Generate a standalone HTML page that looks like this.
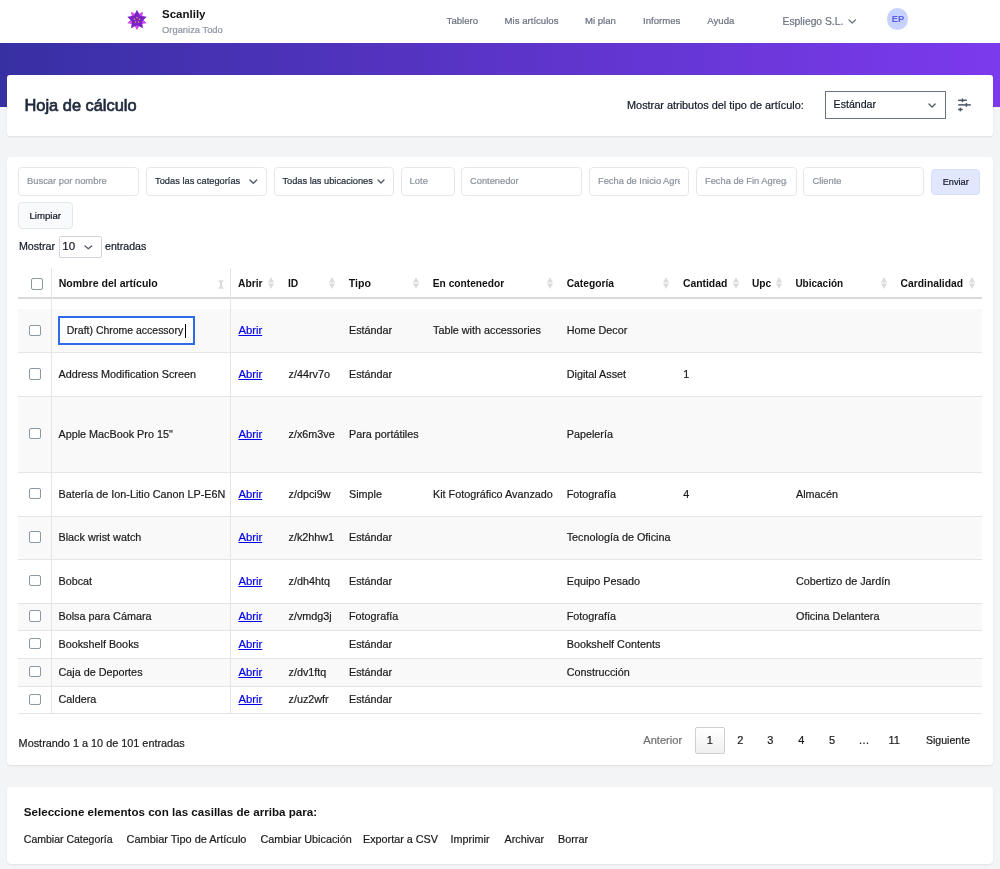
<!DOCTYPE html>
<html><head><meta charset="utf-8"><style>
html,body{margin:0;padding:0;}
body{width:1000px;height:869px;overflow:hidden;position:relative;background:#f3f4f6;font-family:"Liberation Sans", sans-serif;}
.t{position:absolute;white-space:nowrap;}
.b{position:absolute;box-sizing:border-box;}
</style></head><body><div id="w" style="position:absolute;left:0;top:0;width:1000px;height:869px;will-change:transform;">
<div class="b" style="left:0px;top:0px;width:1000px;height:43px;background:#fff;"></div><svg class="b" style="left:0;top:0" width="300" height="42"><polygon points="137.00,30.20 133.94,24.21 127.30,23.15 132.05,18.39 131.00,11.75 137.00,14.80 143.00,11.75 141.95,18.39 146.70,23.15 140.06,24.21" fill="#cf48f2"/><polygon points="137.00,9.80 140.06,15.79 146.70,16.85 141.95,21.61 143.00,28.25 137.00,25.20 131.00,28.25 132.05,21.61 127.30,16.85 133.94,15.79" fill="#7a22c4"/><circle cx="137.00" cy="17.40" r="0.75" fill="#e9a85a"/><circle cx="139.47" cy="19.20" r="0.75" fill="#e9a85a"/><circle cx="138.53" cy="22.10" r="0.75" fill="#e9a85a"/><circle cx="135.47" cy="22.10" r="0.75" fill="#e9a85a"/><circle cx="134.53" cy="19.20" r="0.75" fill="#e9a85a"/></svg><div class="t" style="left:162px;top:4.49px;line-height:20px;font-size:11.5px;color:#111111;font-weight:700;">Scanlily</div><div class="t" style="left:162px;top:19.76px;line-height:20px;font-size:9.4px;color:#8e95a3;font-weight:400;-webkit-text-stroke:0.2px #8e95a3;">Organiza Todo</div><div class="t" style="left:446.6px;top:11.02px;line-height:20px;font-size:9.6px;color:#6b7280;font-weight:400;-webkit-text-stroke:0.2px #6b7280;">Tablero</div><div class="t" style="left:504.6px;top:11.02px;line-height:20px;font-size:9.6px;color:#6b7280;font-weight:400;-webkit-text-stroke:0.2px #6b7280;">Mis artículos</div><div class="t" style="left:585px;top:11.02px;line-height:20px;font-size:9.6px;color:#6b7280;font-weight:400;-webkit-text-stroke:0.2px #6b7280;">Mi plan</div><div class="t" style="left:643px;top:11.02px;line-height:20px;font-size:9.6px;color:#6b7280;font-weight:400;-webkit-text-stroke:0.2px #6b7280;">Informes</div><div class="t" style="left:707.3px;top:11.02px;line-height:20px;font-size:9.6px;color:#6b7280;font-weight:400;-webkit-text-stroke:0.2px #6b7280;">Ayuda</div><div class="t" style="left:782.6px;top:11.92px;line-height:20px;font-size:10.3px;color:#6b7280;font-weight:400;-webkit-text-stroke:0.2px #6b7280;">Espliego S.L.</div><svg class="b" style="left:846.5px;top:17.9px" width="10.399999999999977" height="7.0" viewBox="-2 -2 10.399999999999977 7.0"><polyline points="0,0 3.1999999999999886,3.0 6.399999999999977,0" fill="none" stroke="#6b7280" stroke-width="1.2" stroke-linecap="round" stroke-linejoin="round"/></svg><div class="b" style="left:886.6px;top:8.4px;width:21.4px;height:21.4px;border-radius:50%;background:#c7d2fe;"></div><div class="t" style="left:891.8px;top:8.71px;line-height:20px;font-size:9.3px;color:#5b5ee6;font-weight:700;">EP</div><div class="b" style="left:0px;top:42.8px;width:1000px;height:64.2px;background:linear-gradient(90deg,#3730a3 0%,#5b34c8 50%,#7c3aed 100%);"></div><div class="b" style="left:7px;top:74.5px;width:986px;height:61.0px;background:#fff;border-radius:3px;box-shadow:0 1px 2px rgba(0,0,0,0.08);"></div><div class="t" style="left:24.5px;top:94.70px;line-height:20px;font-size:16.4px;color:#1e293b;font-weight:400;-webkit-text-stroke:0.7px #1e293b;">Hoja de cálculo</div><div class="t" style="left:627px;top:95.13px;line-height:20px;font-size:10.9px;color:#111827;font-weight:400;-webkit-text-stroke:0.2px #111827;">Mostrar atributos del tipo de artículo:</div><div class="b" style="left:825px;top:91px;width:121px;height:28px;border:1px solid #6b7280;background:#fff;"></div><div class="t" style="left:833.6px;top:94.33px;line-height:20px;font-size:10.6px;color:#111827;font-weight:400;-webkit-text-stroke:0.2px #111827;">Estándar</div><svg class="b" style="left:926.5px;top:101.5px" width="10.200000000000045" height="7.099999999999994" viewBox="-2 -2 10.200000000000045 7.099999999999994"><polyline points="0,0 3.1000000000000227,3.0999999999999943 6.2000000000000455,0" fill="none" stroke="#4b5563" stroke-width="1.3" stroke-linecap="round" stroke-linejoin="round"/></svg><svg class="b" style="left:950px;top:90px" width="30" height="30" viewBox="950 90 30 30"><g stroke="#4b5563" stroke-width="1.5" stroke-linecap="butt" fill="none"><line x1="958.2" y1="100.3" x2="966.8" y2="100.3"/><line x1="962.5" y1="98.5" x2="962.5" y2="102.1"/><line x1="958.2" y1="104.9" x2="970.8" y2="104.9"/><line x1="966.4" y1="103.1" x2="966.4" y2="106.7"/><line x1="958.2" y1="109.5" x2="962.7" y2="109.5"/><line x1="960.4" y1="107.7" x2="960.4" y2="111.3"/></g></svg><div class="b" style="left:7px;top:157px;width:986px;height:608px;background:#fff;border-radius:4px;box-shadow:0 1px 2px rgba(0,0,0,0.08);"></div><div class="b" style="left:18px;top:167px;width:121px;height:28.5px;border:1px solid #e5e7eb;border-radius:4px;background:#fff;"></div><div class="t" style="left:27px;top:171.31px;line-height:20px;font-size:9.4px;color:#8b929e;font-weight:400;-webkit-text-stroke:0.2px #8b929e;">Buscar por nombre</div><div class="b" style="left:145.5px;top:167px;width:121.0px;height:28.5px;border:1px solid #e5e7eb;border-radius:4px;background:#fff;"></div><div class="t" style="left:155px;top:171.31px;line-height:20px;font-size:9.3px;color:#1f2937;font-weight:400;-webkit-text-stroke:0.2px #1f2937;">Todas las categorías</div><svg class="b" style="left:248.1px;top:178.3px" width="10.700000000000017" height="7.199999999999989" viewBox="-2 -2 10.700000000000017 7.199999999999989"><polyline points="0,0 3.3500000000000085,3.1999999999999886 6.700000000000017,0" fill="none" stroke="#525a69" stroke-width="1.4" stroke-linecap="round" stroke-linejoin="round"/></svg><div class="b" style="left:273.5px;top:167px;width:120.5px;height:28.5px;border:1px solid #e5e7eb;border-radius:4px;background:#fff;"></div><div class="t" style="left:282.4px;top:171.31px;line-height:20px;font-size:9.26px;color:#1f2937;font-weight:400;-webkit-text-stroke:0.2px #1f2937;">Todas las ubicaciones</div><svg class="b" style="left:376.2px;top:178.3px" width="10.0" height="7.0" viewBox="-2 -2 10.0 7.0"><polyline points="0,0 3.0,3.0 6.0,0" fill="none" stroke="#525a69" stroke-width="1.4" stroke-linecap="round" stroke-linejoin="round"/></svg><div class="b" style="left:401px;top:167px;width:53.5px;height:28.5px;border:1px solid #e5e7eb;border-radius:4px;background:#fff;"></div><div class="t" style="left:409.6px;top:171.31px;line-height:20px;font-size:9.4px;color:#8b929e;font-weight:400;-webkit-text-stroke:0.2px #8b929e;">Lote</div><div class="b" style="left:461.3px;top:167px;width:120.49999999999994px;height:28.5px;border:1px solid #e5e7eb;border-radius:4px;background:#fff;"></div><div class="t" style="left:470px;top:171.31px;line-height:20px;font-size:9.3px;color:#8b929e;font-weight:400;-webkit-text-stroke:0.2px #8b929e;">Contenedor</div><div class="b" style="left:588.8px;top:167px;width:100.5px;height:28.5px;border:1px solid #e5e7eb;border-radius:4px;background:#fff;"></div><div class="t" style="left:598px;top:171.31px;line-height:20px;font-size:9.3px;color:#8b929e;font-weight:400;-webkit-text-stroke:0.2px #8b929e;width:82px;overflow:hidden;">Fecha de Inicio Agre</div><div class="b" style="left:696px;top:167px;width:100.5px;height:28.5px;border:1px solid #e5e7eb;border-radius:4px;background:#fff;"></div><div class="t" style="left:705px;top:171.31px;line-height:20px;font-size:9.3px;color:#8b929e;font-weight:400;-webkit-text-stroke:0.2px #8b929e;width:82px;overflow:hidden;">Fecha de Fin Agregado</div><div class="b" style="left:803.4px;top:167px;width:120.70000000000005px;height:28.5px;border:1px solid #e5e7eb;border-radius:4px;background:#fff;"></div><div class="t" style="left:812.5px;top:171.31px;line-height:20px;font-size:9.3px;color:#8b929e;font-weight:400;-webkit-text-stroke:0.2px #8b929e;">Cliente</div><div class="b" style="left:931px;top:169px;width:48.60000000000002px;height:26px;border:1px solid #d6defa;border-radius:4px;background:#e0e7ff;"></div><div class="t" style="left:942.7px;top:171.71px;line-height:20px;font-size:9.2px;color:#111827;font-weight:400;-webkit-text-stroke:0.2px #111827;">Enviar</div><div class="b" style="left:18px;top:202px;width:55px;height:26.5px;border:1px solid #e5e7eb;border-radius:4px;background:#f9fafb;"></div><div class="t" style="left:29.5px;top:205.62px;line-height:20px;font-size:9.6px;color:#111827;font-weight:400;-webkit-text-stroke:0.2px #111827;">Limpiar</div><div class="t" style="left:18.9px;top:236.13px;line-height:20px;font-size:10.7px;color:#111827;font-weight:400;-webkit-text-stroke:0.2px #111827;">Mostrar</div><div class="b" style="left:58.5px;top:235.5px;width:43.3px;height:22.19999999999999px;border:1px solid #d1d5db;border-radius:2px;background:#fff;"></div><div class="t" style="left:62.3px;top:235.84px;line-height:20px;font-size:11.5px;color:#111827;font-weight:400;-webkit-text-stroke:0.2px #111827;">10</div><svg class="b" style="left:82.5px;top:243.8px" width="10.700000000000003" height="6.799999999999983" viewBox="-2 -2 10.700000000000003 6.799999999999983"><polyline points="0,0 3.3500000000000014,2.799999999999983 6.700000000000003,0" fill="none" stroke="#4b5563" stroke-width="1.2" stroke-linecap="round" stroke-linejoin="round"/></svg><div class="t" style="left:105px;top:236.13px;line-height:20px;font-size:10.6px;color:#111827;font-weight:400;-webkit-text-stroke:0.2px #111827;">entradas</div><div class="b" style="left:18px;top:309px;width:963.5px;height:43.39999999999998px;background:#f9f9f9;"></div><div class="b" style="left:18px;top:396px;width:963.5px;height:76px;background:#f9f9f9;"></div><div class="b" style="left:18px;top:516px;width:963.5px;height:43.299999999999955px;background:#f9f9f9;"></div><div class="b" style="left:18px;top:603px;width:963.5px;height:27.299999999999955px;background:#f9f9f9;"></div><div class="b" style="left:18px;top:658px;width:963.5px;height:28px;background:#f9f9f9;"></div><div class="b" style="left:18px;top:351.9px;width:963.5px;height:1.0px;background:#e5e5e5;"></div><div class="b" style="left:18px;top:395.5px;width:963.5px;height:1.0px;background:#e5e5e5;"></div><div class="b" style="left:18px;top:471.5px;width:963.5px;height:1.0px;background:#e5e5e5;"></div><div class="b" style="left:18px;top:515.5px;width:963.5px;height:1.0px;background:#e5e5e5;"></div><div class="b" style="left:18px;top:558.8px;width:963.5px;height:1.0px;background:#e5e5e5;"></div><div class="b" style="left:18px;top:602.5px;width:963.5px;height:1.0px;background:#e5e5e5;"></div><div class="b" style="left:18px;top:629.8px;width:963.5px;height:1.0px;background:#e5e5e5;"></div><div class="b" style="left:18px;top:657.5px;width:963.5px;height:1.0px;background:#e5e5e5;"></div><div class="b" style="left:18px;top:685.5px;width:963.5px;height:1.0px;background:#e5e5e5;"></div><div class="b" style="left:18px;top:713.0px;width:963.5px;height:1.0px;background:#e5e5e5;"></div><div class="b" style="left:18px;top:297px;width:963.5px;height:2px;background:#d9d9d9;"></div><div class="b" style="left:50.8px;top:268px;width:1.0px;height:445.5px;background:#e5e5e5;"></div><div class="b" style="left:230.3px;top:268px;width:1.0px;height:445.5px;background:#e5e5e5;"></div><div class="b" style="left:31px;top:278px;width:11.5px;height:11.5px;border:1.2px solid #8f96a3;border-radius:2px;background:#fff;"></div><div class="t" style="left:58.7px;top:273.13px;line-height:20px;font-size:10.55px;color:#111111;font-weight:700;">Nombre del artículo</div><svg class="b" style="left:217.8px;top:279.5px" width="6" height="9" viewBox="0 0 6 9"><polygon points="0.2,0.3 5.8,0.3 3,4.5" fill="#dcdcdc"/><polygon points="0.2,8.7 5.8,8.7 3,4.5" fill="#dcdcdc"/><rect x="2.4" y="3.6" width="1.2" height="1.8" fill="#bdbdbd"/></svg><div class="t" style="left:238px;top:273.72px;line-height:20px;font-size:10.3px;color:#111111;font-weight:700;">Abrir</div><svg class="b" style="left:268.2px;top:276.5px" width="6" height="12" viewBox="0 0 6 12"><polygon points="0,5.6 6,5.6 3,0" fill="#dcdcdc"/><polygon points="0,6.4 6,6.4 3,12" fill="#dcdcdc"/></svg><div class="t" style="left:288px;top:273.72px;line-height:20px;font-size:10.3px;color:#111111;font-weight:700;">ID</div><svg class="b" style="left:329.1px;top:276.5px" width="6" height="12" viewBox="0 0 6 12"><polygon points="0,5.6 6,5.6 3,0" fill="#dcdcdc"/><polygon points="0,6.4 6,6.4 3,12" fill="#dcdcdc"/></svg><div class="t" style="left:348.8px;top:273.13px;line-height:20px;font-size:10.6px;color:#111111;font-weight:700;">Tipo</div><svg class="b" style="left:413.1px;top:276.5px" width="6" height="12" viewBox="0 0 6 12"><polygon points="0,5.6 6,5.6 3,0" fill="#dcdcdc"/><polygon points="0,6.4 6,6.4 3,12" fill="#dcdcdc"/></svg><div class="t" style="left:432.8px;top:273.72px;line-height:20px;font-size:10.2px;color:#111111;font-weight:700;">En contenedor</div><svg class="b" style="left:546.8px;top:276.5px" width="6" height="12" viewBox="0 0 6 12"><polygon points="0,5.6 6,5.6 3,0" fill="#dcdcdc"/><polygon points="0,6.4 6,6.4 3,12" fill="#dcdcdc"/></svg><div class="t" style="left:566.7px;top:273.72px;line-height:20px;font-size:10.26px;color:#111111;font-weight:700;">Categoría</div><svg class="b" style="left:662.7px;top:276.5px" width="6" height="12" viewBox="0 0 6 12"><polygon points="0,5.6 6,5.6 3,0" fill="#dcdcdc"/><polygon points="0,6.4 6,6.4 3,12" fill="#dcdcdc"/></svg><div class="t" style="left:682.9px;top:273.72px;line-height:20px;font-size:10.4px;color:#111111;font-weight:700;">Cantidad</div><svg class="b" style="left:732.8px;top:276.5px" width="6" height="12" viewBox="0 0 6 12"><polygon points="0,5.6 6,5.6 3,0" fill="#dcdcdc"/><polygon points="0,6.4 6,6.4 3,12" fill="#dcdcdc"/></svg><div class="t" style="left:752px;top:273.72px;line-height:20px;font-size:10.2px;color:#111111;font-weight:700;">Upc</div><svg class="b" style="left:775.5px;top:276.5px" width="6" height="12" viewBox="0 0 6 12"><polygon points="0,5.6 6,5.6 3,0" fill="#dcdcdc"/><polygon points="0,6.4 6,6.4 3,12" fill="#dcdcdc"/></svg><div class="t" style="left:795.4px;top:273.72px;line-height:20px;font-size:10.0px;color:#111111;font-weight:700;">Ubicación</div><svg class="b" style="left:880.5px;top:276.5px" width="6" height="12" viewBox="0 0 6 12"><polygon points="0,5.6 6,5.6 3,0" fill="#dcdcdc"/><polygon points="0,6.4 6,6.4 3,12" fill="#dcdcdc"/></svg><div class="t" style="left:900.6px;top:273.72px;line-height:20px;font-size:10.3px;color:#111111;font-weight:700;">Cardinalidad</div><svg class="b" style="left:968.6px;top:276.5px" width="6" height="12" viewBox="0 0 6 12"><polygon points="0,5.6 6,5.6 3,0" fill="#dcdcdc"/><polygon points="0,6.4 6,6.4 3,12" fill="#dcdcdc"/></svg><div class="b" style="left:29.2px;top:324.49999999999994px;width:11.500000000000004px;height:11.5px;border:1.2px solid #8f96a3;border-radius:2px;background:#fff;"></div><div class="b" style="left:57.6px;top:316.1px;width:137.3px;height:29.19999999999999px;border:2px solid #2e6be6;background:#fff;"></div><div class="t" style="left:66.8px;top:320.93px;line-height:20px;font-size:10.48px;color:#1a1a1a;font-weight:400;-webkit-text-stroke:0.2px #1a1a1a;">Draft) Chrome accessory</div><div class="b" style="left:184.6px;top:324px;width:1.200000000000017px;height:13.5px;background:#000;"></div><div class="t" style="left:349px;top:320.23px;line-height:20px;font-size:10.8px;color:#1a1a1a;font-weight:400;-webkit-text-stroke:0.2px #1a1a1a;">Estándar</div><div class="t" style="left:433px;top:320.23px;line-height:20px;font-size:10.8px;color:#1a1a1a;font-weight:400;-webkit-text-stroke:0.2px #1a1a1a;">Table with accessories</div><div class="t" style="left:566.7px;top:320.23px;line-height:20px;font-size:10.8px;color:#1a1a1a;font-weight:400;-webkit-text-stroke:0.2px #1a1a1a;">Home Decor</div><div class="t" style="left:238.4px;top:320.34px;line-height:20px;font-size:11.3px;color:#0000ee;font-weight:400;-webkit-text-stroke:0.2px #0000ee;text-decoration:underline;text-underline-offset:1px;text-decoration-thickness:0.8px;">Abrir</div><div class="b" style="left:29.2px;top:367.99999999999994px;width:11.500000000000004px;height:11.5px;border:1.2px solid #8f96a3;border-radius:2px;background:#fff;"></div><div class="t" style="left:58.5px;top:363.73px;line-height:20px;font-size:10.8px;color:#1a1a1a;font-weight:400;-webkit-text-stroke:0.2px #1a1a1a;">Address Modification Screen</div><div class="t" style="left:288.5px;top:363.73px;line-height:20px;font-size:10.8px;color:#1a1a1a;font-weight:400;-webkit-text-stroke:0.2px #1a1a1a;">z/44rv7o</div><div class="t" style="left:349px;top:363.73px;line-height:20px;font-size:10.8px;color:#1a1a1a;font-weight:400;-webkit-text-stroke:0.2px #1a1a1a;">Estándar</div><div class="t" style="left:566.7px;top:363.73px;line-height:20px;font-size:10.8px;color:#1a1a1a;font-weight:400;-webkit-text-stroke:0.2px #1a1a1a;">Digital Asset</div><div class="t" style="left:683.2px;top:363.73px;line-height:20px;font-size:10.8px;color:#1a1a1a;font-weight:400;-webkit-text-stroke:0.2px #1a1a1a;">1</div><div class="t" style="left:238.4px;top:363.84px;line-height:20px;font-size:11.3px;color:#0000ee;font-weight:400;-webkit-text-stroke:0.2px #0000ee;text-decoration:underline;text-underline-offset:1px;text-decoration-thickness:0.8px;">Abrir</div><div class="b" style="left:29.2px;top:427.79999999999995px;width:11.500000000000004px;height:11.5px;border:1.2px solid #8f96a3;border-radius:2px;background:#fff;"></div><div class="t" style="left:58.5px;top:423.53px;line-height:20px;font-size:10.8px;color:#1a1a1a;font-weight:400;-webkit-text-stroke:0.2px #1a1a1a;">Apple MacBook Pro 15"</div><div class="t" style="left:288.5px;top:423.53px;line-height:20px;font-size:10.8px;color:#1a1a1a;font-weight:400;-webkit-text-stroke:0.2px #1a1a1a;">z/x6m3ve</div><div class="t" style="left:349px;top:423.53px;line-height:20px;font-size:10.8px;color:#1a1a1a;font-weight:400;-webkit-text-stroke:0.2px #1a1a1a;">Para portátiles</div><div class="t" style="left:566.7px;top:423.53px;line-height:20px;font-size:10.8px;color:#1a1a1a;font-weight:400;-webkit-text-stroke:0.2px #1a1a1a;">Papelería</div><div class="t" style="left:238.4px;top:423.64px;line-height:20px;font-size:11.3px;color:#0000ee;font-weight:400;-webkit-text-stroke:0.2px #0000ee;text-decoration:underline;text-underline-offset:1px;text-decoration-thickness:0.8px;">Abrir</div><div class="b" style="left:29.2px;top:487.79999999999995px;width:11.500000000000004px;height:11.5px;border:1.2px solid #8f96a3;border-radius:2px;background:#fff;"></div><div class="t" style="left:58.5px;top:483.53px;line-height:20px;font-size:10.8px;color:#1a1a1a;font-weight:400;-webkit-text-stroke:0.2px #1a1a1a;">Batería de Ion-Litio Canon LP-E6N</div><div class="t" style="left:288.5px;top:483.53px;line-height:20px;font-size:10.8px;color:#1a1a1a;font-weight:400;-webkit-text-stroke:0.2px #1a1a1a;">z/dpci9w</div><div class="t" style="left:349px;top:483.53px;line-height:20px;font-size:10.8px;color:#1a1a1a;font-weight:400;-webkit-text-stroke:0.2px #1a1a1a;">Simple</div><div class="t" style="left:433px;top:483.53px;line-height:20px;font-size:10.8px;color:#1a1a1a;font-weight:400;-webkit-text-stroke:0.2px #1a1a1a;">Kit Fotográfico Avanzado</div><div class="t" style="left:566.7px;top:483.53px;line-height:20px;font-size:10.8px;color:#1a1a1a;font-weight:400;-webkit-text-stroke:0.2px #1a1a1a;">Fotografía</div><div class="t" style="left:683.2px;top:483.53px;line-height:20px;font-size:10.8px;color:#1a1a1a;font-weight:400;-webkit-text-stroke:0.2px #1a1a1a;">4</div><div class="t" style="left:796px;top:483.53px;line-height:20px;font-size:10.8px;color:#1a1a1a;font-weight:400;-webkit-text-stroke:0.2px #1a1a1a;">Almacén</div><div class="t" style="left:238.4px;top:483.64px;line-height:20px;font-size:11.3px;color:#0000ee;font-weight:400;-webkit-text-stroke:0.2px #0000ee;text-decoration:underline;text-underline-offset:1px;text-decoration-thickness:0.8px;">Abrir</div><div class="b" style="left:29.2px;top:531.4499999999999px;width:11.500000000000004px;height:11.5px;border:1.2px solid #8f96a3;border-radius:2px;background:#fff;"></div><div class="t" style="left:58.5px;top:527.18px;line-height:20px;font-size:10.8px;color:#1a1a1a;font-weight:400;-webkit-text-stroke:0.2px #1a1a1a;">Black wrist watch</div><div class="t" style="left:288.5px;top:527.18px;line-height:20px;font-size:10.8px;color:#1a1a1a;font-weight:400;-webkit-text-stroke:0.2px #1a1a1a;">z/k2hhw1</div><div class="t" style="left:349px;top:527.18px;line-height:20px;font-size:10.8px;color:#1a1a1a;font-weight:400;-webkit-text-stroke:0.2px #1a1a1a;">Estándar</div><div class="t" style="left:566.7px;top:527.18px;line-height:20px;font-size:10.8px;color:#1a1a1a;font-weight:400;-webkit-text-stroke:0.2px #1a1a1a;">Tecnología de Oficina</div><div class="t" style="left:238.4px;top:527.29px;line-height:20px;font-size:11.3px;color:#0000ee;font-weight:400;-webkit-text-stroke:0.2px #0000ee;text-decoration:underline;text-underline-offset:1px;text-decoration-thickness:0.8px;">Abrir</div><div class="b" style="left:29.2px;top:574.9499999999999px;width:11.500000000000004px;height:11.5px;border:1.2px solid #8f96a3;border-radius:2px;background:#fff;"></div><div class="t" style="left:58.5px;top:570.68px;line-height:20px;font-size:10.8px;color:#1a1a1a;font-weight:400;-webkit-text-stroke:0.2px #1a1a1a;">Bobcat</div><div class="t" style="left:288.5px;top:570.68px;line-height:20px;font-size:10.8px;color:#1a1a1a;font-weight:400;-webkit-text-stroke:0.2px #1a1a1a;">z/dh4htq</div><div class="t" style="left:349px;top:570.68px;line-height:20px;font-size:10.8px;color:#1a1a1a;font-weight:400;-webkit-text-stroke:0.2px #1a1a1a;">Estándar</div><div class="t" style="left:566.7px;top:570.68px;line-height:20px;font-size:10.8px;color:#1a1a1a;font-weight:400;-webkit-text-stroke:0.2px #1a1a1a;">Equipo Pesado</div><div class="t" style="left:796px;top:570.68px;line-height:20px;font-size:10.8px;color:#1a1a1a;font-weight:400;-webkit-text-stroke:0.2px #1a1a1a;">Cobertizo de Jardín</div><div class="t" style="left:238.4px;top:570.79px;line-height:20px;font-size:11.3px;color:#0000ee;font-weight:400;-webkit-text-stroke:0.2px #0000ee;text-decoration:underline;text-underline-offset:1px;text-decoration-thickness:0.8px;">Abrir</div><div class="b" style="left:29.2px;top:610.4499999999999px;width:11.500000000000004px;height:11.5px;border:1.2px solid #8f96a3;border-radius:2px;background:#fff;"></div><div class="t" style="left:58.5px;top:606.18px;line-height:20px;font-size:10.8px;color:#1a1a1a;font-weight:400;-webkit-text-stroke:0.2px #1a1a1a;">Bolsa para Cámara</div><div class="t" style="left:288.5px;top:606.18px;line-height:20px;font-size:10.8px;color:#1a1a1a;font-weight:400;-webkit-text-stroke:0.2px #1a1a1a;">z/vmdg3j</div><div class="t" style="left:349px;top:606.18px;line-height:20px;font-size:10.8px;color:#1a1a1a;font-weight:400;-webkit-text-stroke:0.2px #1a1a1a;">Fotografía</div><div class="t" style="left:566.7px;top:606.18px;line-height:20px;font-size:10.8px;color:#1a1a1a;font-weight:400;-webkit-text-stroke:0.2px #1a1a1a;">Fotografía</div><div class="t" style="left:796px;top:606.18px;line-height:20px;font-size:10.8px;color:#1a1a1a;font-weight:400;-webkit-text-stroke:0.2px #1a1a1a;">Oficina Delantera</div><div class="t" style="left:238.4px;top:606.29px;line-height:20px;font-size:11.3px;color:#0000ee;font-weight:400;-webkit-text-stroke:0.2px #0000ee;text-decoration:underline;text-underline-offset:1px;text-decoration-thickness:0.8px;">Abrir</div><div class="b" style="left:29.2px;top:637.9499999999999px;width:11.500000000000004px;height:11.5px;border:1.2px solid #8f96a3;border-radius:2px;background:#fff;"></div><div class="t" style="left:58.5px;top:633.68px;line-height:20px;font-size:10.8px;color:#1a1a1a;font-weight:400;-webkit-text-stroke:0.2px #1a1a1a;">Bookshelf Books</div><div class="t" style="left:349px;top:633.68px;line-height:20px;font-size:10.8px;color:#1a1a1a;font-weight:400;-webkit-text-stroke:0.2px #1a1a1a;">Estándar</div><div class="t" style="left:566.7px;top:633.68px;line-height:20px;font-size:10.8px;color:#1a1a1a;font-weight:400;-webkit-text-stroke:0.2px #1a1a1a;">Bookshelf Contents</div><div class="t" style="left:238.4px;top:633.79px;line-height:20px;font-size:11.3px;color:#0000ee;font-weight:400;-webkit-text-stroke:0.2px #0000ee;text-decoration:underline;text-underline-offset:1px;text-decoration-thickness:0.8px;">Abrir</div><div class="b" style="left:29.2px;top:665.8px;width:11.500000000000004px;height:11.5px;border:1.2px solid #8f96a3;border-radius:2px;background:#fff;"></div><div class="t" style="left:58.5px;top:661.53px;line-height:20px;font-size:10.8px;color:#1a1a1a;font-weight:400;-webkit-text-stroke:0.2px #1a1a1a;">Caja de Deportes</div><div class="t" style="left:288.5px;top:661.53px;line-height:20px;font-size:10.8px;color:#1a1a1a;font-weight:400;-webkit-text-stroke:0.2px #1a1a1a;">z/dv1ftq</div><div class="t" style="left:349px;top:661.53px;line-height:20px;font-size:10.8px;color:#1a1a1a;font-weight:400;-webkit-text-stroke:0.2px #1a1a1a;">Estándar</div><div class="t" style="left:566.7px;top:661.53px;line-height:20px;font-size:10.8px;color:#1a1a1a;font-weight:400;-webkit-text-stroke:0.2px #1a1a1a;">Construcción</div><div class="t" style="left:238.4px;top:661.64px;line-height:20px;font-size:11.3px;color:#0000ee;font-weight:400;-webkit-text-stroke:0.2px #0000ee;text-decoration:underline;text-underline-offset:1px;text-decoration-thickness:0.8px;">Abrir</div><div class="b" style="left:29.2px;top:693.55px;width:11.500000000000004px;height:11.5px;border:1.2px solid #8f96a3;border-radius:2px;background:#fff;"></div><div class="t" style="left:58.5px;top:689.28px;line-height:20px;font-size:10.8px;color:#1a1a1a;font-weight:400;-webkit-text-stroke:0.2px #1a1a1a;">Caldera</div><div class="t" style="left:288.5px;top:689.28px;line-height:20px;font-size:10.8px;color:#1a1a1a;font-weight:400;-webkit-text-stroke:0.2px #1a1a1a;">z/uz2wfr</div><div class="t" style="left:349px;top:689.28px;line-height:20px;font-size:10.8px;color:#1a1a1a;font-weight:400;-webkit-text-stroke:0.2px #1a1a1a;">Estándar</div><div class="t" style="left:238.4px;top:689.39px;line-height:20px;font-size:11.3px;color:#0000ee;font-weight:400;-webkit-text-stroke:0.2px #0000ee;text-decoration:underline;text-underline-offset:1px;text-decoration-thickness:0.8px;">Abrir</div><div class="t" style="left:18.6px;top:733.23px;line-height:20px;font-size:10.86px;color:#1a1a1a;font-weight:400;-webkit-text-stroke:0.2px #1a1a1a;">Mostrando 1 a 10 de 101 entradas</div><div class="b" style="left:695px;top:726.5px;width:29.600000000000023px;height:27.700000000000045px;border:1px solid #cfcfcf;border-radius:2px;background:linear-gradient(180deg,#ffffff 0%,#f0f0f0 100%);"></div><div class="t" style="left:643.3px;top:730.33px;line-height:20px;font-size:11.1px;color:#707070;font-weight:400;-webkit-text-stroke:0.2px #707070;">Anterior</div><div class="t" style="left:706.85px;top:730.33px;line-height:20px;font-size:11px;color:#1a1a1a;font-weight:400;-webkit-text-stroke:0.2px #1a1a1a;">1</div><div class="t" style="left:737.1500000000001px;top:730.33px;line-height:20px;font-size:11px;color:#1a1a1a;font-weight:400;-webkit-text-stroke:0.2px #1a1a1a;">2</div><div class="t" style="left:767.35px;top:730.33px;line-height:20px;font-size:11px;color:#1a1a1a;font-weight:400;-webkit-text-stroke:0.2px #1a1a1a;">3</div><div class="t" style="left:798.25px;top:730.33px;line-height:20px;font-size:11px;color:#1a1a1a;font-weight:400;-webkit-text-stroke:0.2px #1a1a1a;">4</div><div class="t" style="left:828.95px;top:730.33px;line-height:20px;font-size:11px;color:#1a1a1a;font-weight:400;-webkit-text-stroke:0.2px #1a1a1a;">5</div><div class="t" style="left:858.45px;top:730.33px;line-height:20px;font-size:11px;color:#1a1a1a;font-weight:400;-webkit-text-stroke:0.2px #1a1a1a;">…</div><div class="t" style="left:888.5px;top:730.33px;line-height:20px;font-size:11px;color:#1a1a1a;font-weight:400;-webkit-text-stroke:0.2px #1a1a1a;">11</div><div class="t" style="left:925.9px;top:730.33px;line-height:20px;font-size:10.6px;color:#1a1a1a;font-weight:400;-webkit-text-stroke:0.2px #1a1a1a;">Siguiente</div><div class="b" style="left:7px;top:787px;width:986px;height:77px;background:#fff;border-radius:4px;box-shadow:0 1px 2px rgba(0,0,0,0.08);"></div><div class="t" style="left:23.8px;top:802.34px;line-height:20px;font-size:11.6px;color:#111111;font-weight:700;">Seleccione elementos con las casillas de arriba para:</div><div class="t" style="left:23.8px;top:828.83px;line-height:20px;font-size:10.5px;color:#1a1a1a;font-weight:400;-webkit-text-stroke:0.2px #1a1a1a;">Cambiar Categoría</div><div class="t" style="left:126.5px;top:828.83px;line-height:20px;font-size:10.96px;color:#1a1a1a;font-weight:400;-webkit-text-stroke:0.2px #1a1a1a;">Cambiar Tipo de Artículo</div><div class="t" style="left:260.5px;top:828.83px;line-height:20px;font-size:10.8px;color:#1a1a1a;font-weight:400;-webkit-text-stroke:0.2px #1a1a1a;">Cambiar Ubicación</div><div class="t" style="left:363px;top:828.83px;line-height:20px;font-size:10.8px;color:#1a1a1a;font-weight:400;-webkit-text-stroke:0.2px #1a1a1a;">Exportar a CSV</div><div class="t" style="left:450.6px;top:828.83px;line-height:20px;font-size:10.8px;color:#1a1a1a;font-weight:400;-webkit-text-stroke:0.2px #1a1a1a;">Imprimir</div><div class="t" style="left:504.5px;top:828.83px;line-height:20px;font-size:10.8px;color:#1a1a1a;font-weight:400;-webkit-text-stroke:0.2px #1a1a1a;">Archivar</div><div class="t" style="left:558px;top:828.83px;line-height:20px;font-size:10.8px;color:#1a1a1a;font-weight:400;-webkit-text-stroke:0.2px #1a1a1a;">Borrar</div>
</div></body></html>
